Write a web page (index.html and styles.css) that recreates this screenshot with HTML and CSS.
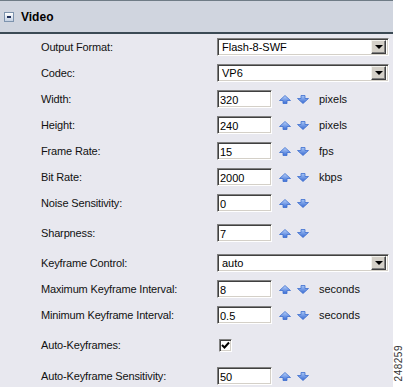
FILE: index.html
```html
<!doctype html>
<html lang="en">
<head>
	<meta charset="UTF-8">
	<title>Video</title>
	<link rel="stylesheet" href="styles.css">
</head>
<body>
	<!-- shared gradients for the spin arrows -->
	<svg class="defs" width="0" height="0">
		<defs>
			<linearGradient id="g-up" x1="0" y1="0" x2="0" y2="1">
				<stop offset="0" stop-color="#b9d2fa"/>
				<stop offset="1" stop-color="#3d6fd6"/>
			</linearGradient>
			<linearGradient id="g-down" x1="0" y1="0" x2="0" y2="1">
				<stop offset="0" stop-color="#a9c7f7"/>
				<stop offset="1" stop-color="#3a6bd2"/>
			</linearGradient>
		</defs>
	</svg>

	<!-- video settings panel -->
	<div class="panel">
		<div class="panel-head">
			<span class="toggle"></span>
			<span class="title">Video</span>
		</div>

		<div class="panel-body">
			<div class="row">
				<span class="label">Output Format:</span>
				<div class="ctrl"><div class="select"><span class="val">Flash-8-SWF</span><span class="drop"></span></div></div>
			</div>
			<div class="row">
				<span class="label">Codec:</span>
				<div class="ctrl"><div class="select"><span class="val">VP6</span><span class="drop"></span></div></div>
			</div>
			<div class="row">
				<span class="label">Width:</span>
				<div class="ctrl">
					<span class="field">320</span>
					<svg class="arr up" width="12" height="9" viewBox="0 0 12 9"><polygon points="6,0.5 11.5,5.5 8,5.5 8,8.5 4,8.5 4,5.5 0.5,5.5"/></svg>
					<svg class="arr down" width="12" height="9" viewBox="0 0 12 9"><polygon points="4,0.5 8,0.5 8,3.5 11.5,3.5 6,8.5 0.5,3.5 4,3.5"/></svg>
					<span class="unit">pixels</span>
				</div>
			</div>
			<div class="row">
				<span class="label">Height:</span>
				<div class="ctrl">
					<span class="field">240</span>
					<svg class="arr up" width="12" height="9" viewBox="0 0 12 9"><polygon points="6,0.5 11.5,5.5 8,5.5 8,8.5 4,8.5 4,5.5 0.5,5.5"/></svg>
					<svg class="arr down" width="12" height="9" viewBox="0 0 12 9"><polygon points="4,0.5 8,0.5 8,3.5 11.5,3.5 6,8.5 0.5,3.5 4,3.5"/></svg>
					<span class="unit">pixels</span>
				</div>
			</div>
			<div class="row">
				<span class="label">Frame Rate:</span>
				<div class="ctrl">
					<span class="field">15</span>
					<svg class="arr up" width="12" height="9" viewBox="0 0 12 9"><polygon points="6,0.5 11.5,5.5 8,5.5 8,8.5 4,8.5 4,5.5 0.5,5.5"/></svg>
					<svg class="arr down" width="12" height="9" viewBox="0 0 12 9"><polygon points="4,0.5 8,0.5 8,3.5 11.5,3.5 6,8.5 0.5,3.5 4,3.5"/></svg>
					<span class="unit">fps</span>
				</div>
			</div>
			<div class="row">
				<span class="label">Bit Rate:</span>
				<div class="ctrl">
					<span class="field">2000</span>
					<svg class="arr up" width="12" height="9" viewBox="0 0 12 9"><polygon points="6,0.5 11.5,5.5 8,5.5 8,8.5 4,8.5 4,5.5 0.5,5.5"/></svg>
					<svg class="arr down" width="12" height="9" viewBox="0 0 12 9"><polygon points="4,0.5 8,0.5 8,3.5 11.5,3.5 6,8.5 0.5,3.5 4,3.5"/></svg>
					<span class="unit">kbps</span>
				</div>
			</div>
			<div class="row">
				<span class="label">Noise Sensitivity:</span>
				<div class="ctrl">
					<span class="field">0</span>
					<svg class="arr up" width="12" height="9" viewBox="0 0 12 9"><polygon points="6,0.5 11.5,5.5 8,5.5 8,8.5 4,8.5 4,5.5 0.5,5.5"/></svg>
					<svg class="arr down" width="12" height="9" viewBox="0 0 12 9"><polygon points="4,0.5 8,0.5 8,3.5 11.5,3.5 6,8.5 0.5,3.5 4,3.5"/></svg>
				</div>
			</div>
			<div class="row tall">
				<span class="label">Sharpness:</span>
				<div class="ctrl">
					<span class="field">7</span>
					<svg class="arr up" width="12" height="9" viewBox="0 0 12 9"><polygon points="6,0.5 11.5,5.5 8,5.5 8,8.5 4,8.5 4,5.5 0.5,5.5"/></svg>
					<svg class="arr down" width="12" height="9" viewBox="0 0 12 9"><polygon points="4,0.5 8,0.5 8,3.5 11.5,3.5 6,8.5 0.5,3.5 4,3.5"/></svg>
				</div>
			</div>
			<div class="row">
				<span class="label">Keyframe Control:</span>
				<div class="ctrl"><div class="select"><span class="val">auto</span><span class="drop"></span></div></div>
			</div>
			<div class="row">
				<span class="label">Maximum Keyframe Interval:</span>
				<div class="ctrl">
					<span class="field">8</span>
					<svg class="arr up" width="12" height="9" viewBox="0 0 12 9"><polygon points="6,0.5 11.5,5.5 8,5.5 8,8.5 4,8.5 4,5.5 0.5,5.5"/></svg>
					<svg class="arr down" width="12" height="9" viewBox="0 0 12 9"><polygon points="4,0.5 8,0.5 8,3.5 11.5,3.5 6,8.5 0.5,3.5 4,3.5"/></svg>
					<span class="unit">seconds</span>
				</div>
			</div>
			<div class="row">
				<span class="label">Minimum Keyframe Interval:</span>
				<div class="ctrl">
					<span class="field">0.5</span>
					<svg class="arr up" width="12" height="9" viewBox="0 0 12 9"><polygon points="6,0.5 11.5,5.5 8,5.5 8,8.5 4,8.5 4,5.5 0.5,5.5"/></svg>
					<svg class="arr down" width="12" height="9" viewBox="0 0 12 9"><polygon points="4,0.5 8,0.5 8,3.5 11.5,3.5 6,8.5 0.5,3.5 4,3.5"/></svg>
					<span class="unit">seconds</span>
				</div>
			</div>
			<div class="row tall">
				<span class="label">Auto-Keyframes:</span>
				<div class="ctrl">
					<span class="check"><svg width="9" height="9" viewBox="0 0 9 9"><polyline points="1,4 3.5,6.5 8,1.5"/></svg></span>
				</div>
			</div>
			<div class="row last">
				<span class="label">Auto-Keyframe Sensitivity:</span>
				<div class="ctrl">
					<span class="field">50</span>
					<svg class="arr up" width="12" height="9" viewBox="0 0 12 9"><polygon points="6,0.5 11.5,5.5 8,5.5 8,8.5 4,8.5 4,5.5 0.5,5.5"/></svg>
					<svg class="arr down" width="12" height="9" viewBox="0 0 12 9"><polygon points="4,0.5 8,0.5 8,3.5 11.5,3.5 6,8.5 0.5,3.5 4,3.5"/></svg>
				</div>
			</div>
		</div>
	</div>

	<div class="fig-id">248259</div>
</body>
</html>
```

FILE: styles.css
```css
* {
	margin: 0px;
	padding: 0px;
	box-sizing: border-box;
}

body {
	background: #fff;
	font-family: "Liberation Sans", Arial, sans-serif;
	font-size: 11px;
	color: #000;
	position: relative;
	height: 387px;
	overflow: hidden;
}

.defs {
	position: absolute;
}

.panel {
	width: 393px;
	height: 387px;
	background: #e8e8ef;
}

/* header bar */
.panel-head {
	height: 34px;
	border-top: 1px solid #6f7c86;
	border-bottom: 2px solid #3b4a55;
	background: #d0d5df;
	display: flex;
	align-items: center;
	padding-left: 4px;
}

.panel-head .toggle {
	width: 10px;
	height: 10px;
	border: 1px solid #7d93ad;
	background: linear-gradient(#ffffff, #c4d1e3);
	position: relative;
	margin-right: 7px;
}

.panel-head .toggle:after {
	content: "";
	position: absolute;
	left: 2px;
	top: 3px;
	width: 4px;
	height: 2px;
	background: #1f2f5a;
}

.panel-head .title {
	font-weight: bold;
	font-size: 12px;
	color: #000;
}

/* rows */
.row {
	height: 26px;
	display: grid;
	grid-template-columns: 175px 1fr;
	align-items: center;
	padding-left: 41px;
}

.row.tall {
	height: 34px;
}

.row.last {
	height: 28px;
}

.label {
	color: #111;
	white-space: nowrap;
	letter-spacing: -0.15px;
}

.ctrl {
	display: flex;
	align-items: center;
	padding-left: 1px;
}

.select {
	width: 172px;
	height: 18px;
	background: #fff;
	border-top: 1px solid #808080;
	border-left: 1px solid #808080;
	border-bottom: 1px solid #fff;
	border-right: 1px solid #fff;
	box-shadow: inset 1px 1px 0 #404040, inset -1px -1px 0 #d4d0c8;
	display: flex;
	align-items: center;
	justify-content: space-between;
	padding: 2px 2px 2px 4px;
}

.select .drop {
	width: 15px;
	height: 14px;
	background: #d4d0c8;
	border-top: 1px solid #f4f3ee;
	border-left: 1px solid #f4f3ee;
	border-bottom: 1px solid #404040;
	border-right: 1px solid #404040;
	box-shadow: inset -1px -1px 0 #808080;
	position: relative;
}

.select .drop:after {
	content: "";
	position: absolute;
	left: 3px;
	top: 4px;
	border-left: 4px solid transparent;
	border-right: 4px solid transparent;
	border-top: 4px solid #000;
}

.field {
	width: 55px;
	height: 18px;
	background: #fff;
	border-top: 1px solid #808080;
	border-left: 1px solid #808080;
	border-bottom: 1px solid #fff;
	border-right: 1px solid #fff;
	box-shadow: inset 1px 1px 0 #404040, inset -1px -1px 0 #d4d0c8;
	padding: 2px 0 0 2px;
	line-height: 14px;
}

.arr {
	margin-left: 6px;
	stroke: #3e6fcf;
	stroke-width: 0.8;
	stroke-linejoin: round;
}

.arr.up {
	margin-left: 7px;
	fill: url(#g-up);
}

.arr.down {
	fill: url(#g-down);
}

.unit {
	margin-left: 10px;
	color: #111;
}

.check {
	width: 13px;
	height: 13px;
	margin-left: 2px;
	background: #fff;
	border-top: 1px solid #808080;
	border-left: 1px solid #808080;
	border-bottom: 1px solid #fff;
	border-right: 1px solid #fff;
	box-shadow: inset 1px 1px 0 #404040, inset -1px -1px 0 #d4d0c8;
	display: flex;
	align-items: center;
	justify-content: center;
}

.check svg {
	fill: none;
	stroke: #000;
	stroke-width: 2;
}

/* figure number on the right edge */
.fig-id {
	position: absolute;
	right: 2px;
	bottom: 6px;
	writing-mode: vertical-rl;
	transform: rotate(180deg);
	font-size: 10px;
	color: #333;
	letter-spacing: 0.5px;
}
```
